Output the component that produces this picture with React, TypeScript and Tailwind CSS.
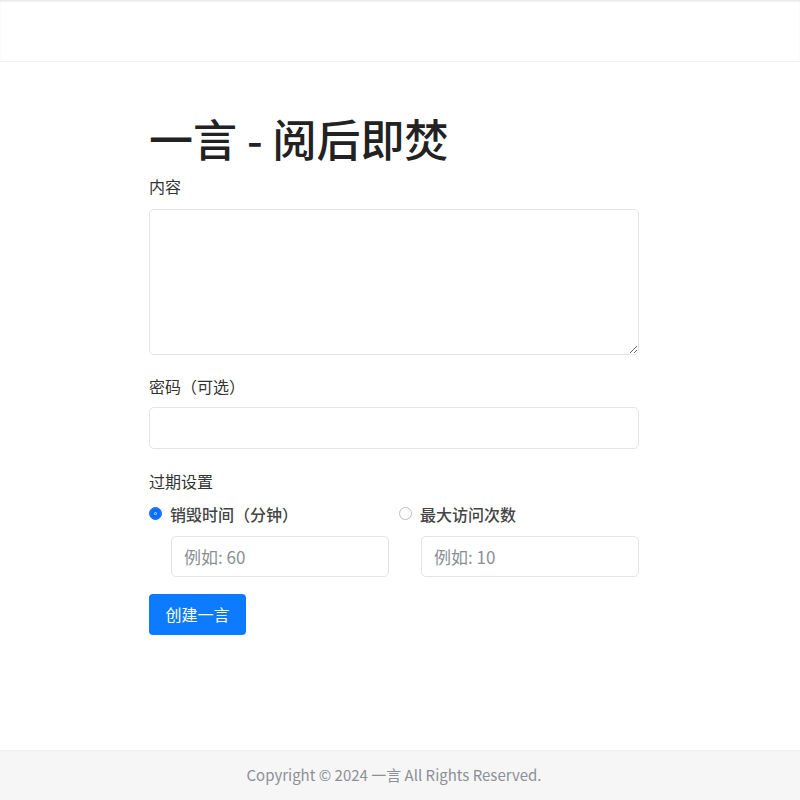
import { useState } from 'react'

const font = { fontFamily: '"Noto Sans CJK SC", "Noto Sans", sans-serif' }

const field =
  'block w-full rounded-[5px] border border-[#e2e4e7] px-3 text-[17px] outline-none placeholder:text-[#8a8f95]'

const radio =
  'h-[13px] w-[13px] shrink-0 appearance-none rounded-full border border-[#b9bdc2] bg-white checked:border-[#0d6efd] checked:bg-[#0d6efd] checked:shadow-[inset_0_0_0_4px_#0d6efd,inset_0_0_0_5px_#9cc4ff]'

export default function App() {
  const [mode, setMode] = useState<'time' | 'visits'>('time')

  return (
    <div className="flex min-h-[800px] flex-col bg-white text-[#212529]" style={font}>
      {/* top bar */}
      <header className="h-[62px] border-b border-[#f1f1f1] bg-white shadow-[inset_0_2px_3px_-1px_rgba(0,0,0,0.12)]" />

      <main className="flex-1">
        <div className="ml-[149px] w-[490px] pt-[50px]">
          <h1 className="text-[44px] font-medium leading-[1.2] text-[#222]">一言 - 阅后即焚</h1>

          <label className="mt-[9px] block text-[16px] leading-[24px] text-[#333]">内容</label>
          <textarea className={`mt-[11px] h-[146px] py-2 ${field}`} />

          <label className="mt-[19px] block text-[16px] leading-[24px] text-[#333]">密码（可选）</label>
          <input type="password" className={`mt-[9px] h-[42px] ${field}`} />

          <p className="mt-[20px] text-[16px] leading-[24px] text-[#333]">过期设置</p>

          <div className="mt-[9px] grid grid-cols-2 gap-[10px]">
            <div>
              <label className="flex items-center gap-[8px] text-[16px] font-medium leading-[24px] text-[#444]">
                <input
                  type="radio"
                  name="mode"
                  checked={mode === 'time'}
                  onChange={() => setMode('time')}
                  className={radio}
                />
                销毁时间（分钟）
              </label>
              <input type="number" placeholder="例如: 60" className={`ml-[22px] mt-[10px] h-[41px] !w-[218px] ${field}`} />
            </div>
            <div>
              <label className="flex items-center gap-[8px] text-[16px] font-medium leading-[24px] text-[#444]">
                <input
                  type="radio"
                  name="mode"
                  checked={mode === 'visits'}
                  onChange={() => setMode('visits')}
                  className={radio}
                />
                最大访问次数
              </label>
              <input type="number" placeholder="例如: 10" className={`ml-[22px] mt-[10px] h-[41px] !w-[218px] ${field}`} />
            </div>
          </div>

          <button className="mt-[17px] h-[41px] w-[97px] rounded-[4px] bg-[#0d7bff] text-[16px] text-white">
            创建一言
          </button>
        </div>
      </main>

      <footer className="flex h-[50px] items-center justify-center border-t border-[#ececec] bg-[#f6f6f6]">
        <span className="pr-[12px] text-[15px] text-[#8c9096]">Copyright © 2024 一言 All Rights Reserved.</span>
      </footer>
    </div>
  )
}
